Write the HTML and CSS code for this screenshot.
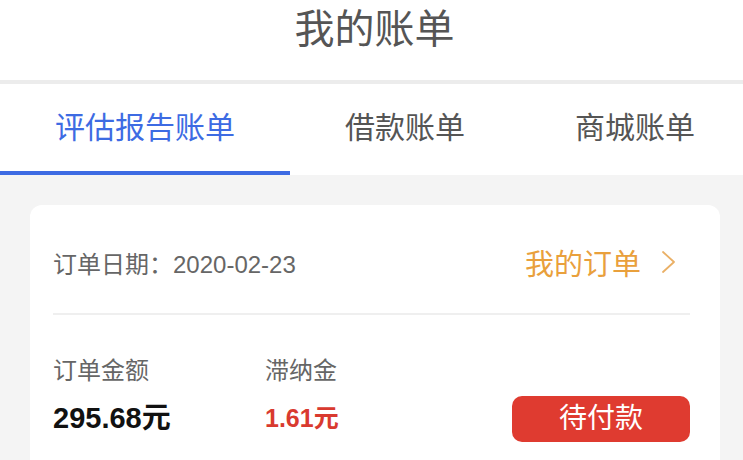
FILE: index.html
```html
<!DOCTYPE html>
<html lang="zh-CN">
<head>
<meta charset="utf-8">
<title>我的账单</title>
<link rel="stylesheet" href="styles.css">
</head>
<body>
<header class="header">
  <h1 class="title">我的账单</h1>
</header>
<nav class="tabs">
  <div class="tab tab-active">评估报告账单</div>
  <div class="tab">借款账单</div>
  <div class="tab">商城账单</div>
</nav>
<main class="content">
  <section class="card">
    <div class="card-head">
      <span class="order-date">订单日期：2020-02-23</span>
      <a class="order-link">我的订单
        <svg class="chevron" width="16" height="24" viewBox="0 0 16 24"><polyline points="2,2 13,12 2,22" fill="none" stroke="#eab066" stroke-width="1.8" stroke-linecap="round" stroke-linejoin="round"/></svg>
      </a>
    </div>
    <div class="card-body">
      <div class="col col-amount">
        <div class="label">订单金额</div>
        <div class="value value-amount">295.68元</div>
      </div>
      <div class="col">
        <div class="label">滞纳金</div>
        <div class="value value-late">1.61元</div>
      </div>
      <button class="pay-btn">待付款</button>
    </div>
  </section>
</main>
</body>
</html>
```
FILE: styles.css
```css
* { box-sizing: border-box; }
html, body {
  margin: 0;
  padding: 0;
}
body {
  background: #f4f4f4;
  font-family: "Liberation Sans", "Noto Sans CJK SC", sans-serif;
  width: 743px;
  height: 460px;
  overflow: hidden;
}
.header {
  background: #fff;
  height: 84px;
  border-bottom: 4px solid #ececec;
}
.title {
  margin: 0;
  padding-left: 6px;
  font-size: 40px;
  font-weight: 400;
  line-height: 58px;
  color: #555;
  text-align: center;
}
.tabs {
  display: flex;
  background: #fff;
  height: 91px;
  white-space: nowrap;
  overflow: hidden;
}
.tab {
  flex: none;
  padding: 0 55px;
  font-size: 30px;
  line-height: 87px;
  height: 91px;
  color: #555;
  border-bottom: 4px solid transparent;
}
.tab-active {
  color: #3d6be3;
  border-bottom-color: #3d6be3;
}
.content {
  padding: 30px 23px 0 30px;
}
.card {
  background: #fff;
  border-radius: 12px;
  padding: 0 30px 30px 23px;
}
.card-head {
  display: flex;
  align-items: center;
  justify-content: space-between;
  height: 110px;
  padding-top: 6px;
  border-bottom: 2px solid #efefef;
}
.order-date {
  font-size: 24px;
  color: #666;
}
.order-link {
  display: flex;
  align-items: center;
  font-size: 29px;
  color: #e9a03c;
  padding-right: 13px;
}
.chevron {
  margin-left: 20px;
}
.card-body {
  display: flex;
  align-items: flex-end;
  padding-top: 41px;
}
.col-amount {
  width: 212px;
}
.label {
  font-size: 24px;
  line-height: 30px;
  color: #666;
}
.value {
  margin-top: 9px;
  line-height: 46px;
  font-weight: 700;
}
.value-amount {
  font-size: 29px;
  color: #111;
}
.value-late {
  font-size: 25px;
  color: #d93a2f;
}
.pay-btn {
  margin-left: auto;
  width: 178px;
  height: 46px;
  border: none;
  border-radius: 10px;
  background: #df3b30;
  color: #fff;
  font-family: inherit;
  font-size: 28px;
  line-height: 46px;
  padding: 0;
  margin-bottom: -1px;
}
```
